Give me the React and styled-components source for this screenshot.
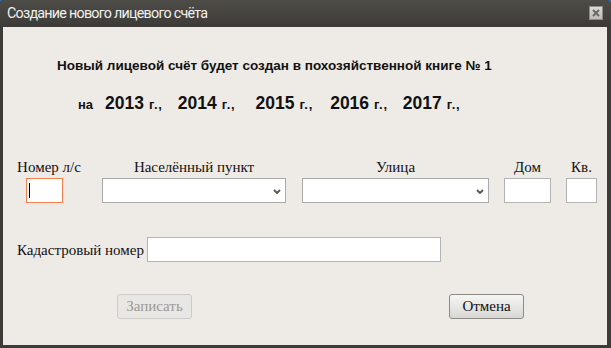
import React from 'react';
import styled, { createGlobalStyle } from 'styled-components';

const GlobalStyle = createGlobalStyle`
  html, body {
    margin: 0;
    padding: 0;
    background: #2f6fb8;
  }
`;

const Dialog = styled.div`
  width: 611px;
  height: 348px;
  box-sizing: border-box;
  display: flex;
  flex-direction: column;
  background: #3c3b37;
  border-radius: 4px 5px 0 0;
  padding: 0 4px 3px 3px;
  overflow: hidden;
`;

const TitleBar = styled.div`
  height: 27px;
  display: flex;
  align-items: center;
  justify-content: space-between;
  margin: 0 -4px 0 -3px;
  padding: 0 8px 2px 7px;
  box-sizing: border-box;
  background: linear-gradient(#4d4c47, #3c3b37);
`;

const Title = styled.div`
  font-family: Roboto, 'DejaVu Sans', sans-serif;
  font-size: 14.3px;
  letter-spacing: -0.75px;
  color: #f2f1ee;
`;

const CloseBox = styled.div`
  width: 12px;
  height: 12px;
  background: linear-gradient(#dcdbd8, #bdbcb8);
  border: 1px solid #8d8c88;
  display: flex;
  align-items: center;
  justify-content: center;
  margin-top: 1px;
`;

const Body = styled.div`
  flex: 1;
  background: #eeebe7;
  display: flex;
  flex-direction: column;
  padding: 0 0 0 13px;
`;

const Heading = styled.div`
  font-family: 'Liberation Sans', Arial, sans-serif;
  font-weight: bold;
  font-size: 13.5px;
  color: #111;
  margin: 31px 0 0 41px;
  line-height: 16px;
`;

const Years = styled.div`
  display: flex;
  align-items: baseline;
  margin: 18px 0 0 62px;
  font-family: 'Liberation Sans', Arial, sans-serif;
  font-weight: bold;
  color: #111;
  line-height: 22px;
`;

const Small = styled.span`
  font-size: 13px;
  letter-spacing: ${p => (p.$wide ? 0.8 : 0)}px;
  margin-left: ${p => p.$ml || 0}px;
`;

const Big = styled.span`
  font-size: 17.5px;
  margin-left: ${p => p.$ml || 0}px;
`;

const FieldsRow = styled.div`
  display: flex;
  margin-top: 42px;
`;

const Field = styled.div`
  width: ${p => p.$w}px;
  margin-left: ${p => p.$ml || 0}px;
  display: flex;
  flex-direction: column;
  align-items: center;
`;

const Label = styled.label`
  font-family: 'Liberation Serif', 'Times New Roman', serif;
  font-size: 15px;
  color: #111;
  line-height: 18px;
  height: 18px;
  margin-bottom: 2px;
  white-space: nowrap;
`;

const TextBox = styled.div`
  position: relative;
  width: ${p => p.$w}px;
  height: 25px;
  box-sizing: border-box;
  background: #fff;
  border: 1px solid ${p => (p.$focused ? '#f47f4f' : '#b3b3b3')};
  align-self: ${p => (p.$start ? 'flex-start' : 'center')};
  margin-left: ${p => p.$ml || 0}px;
`;

const Caret = styled.span`
  position: absolute;
  left: 2px;
  top: 4px;
  width: 1px;
  height: 15px;
  background: #000;
`;

const SelectBox = styled.div`
  position: relative;
  width: ${p => p.$w}px;
  height: 25px;
  box-sizing: border-box;
  background: #fff;
  border: 1px solid #ababab;
`;

const Chevron = styled.svg`
  position: absolute;
  right: 4px;
  top: 10px;
`;

const CadRow = styled.div`
  display: flex;
  align-items: center;
  margin-top: 34px;
`;

const CadLabel = styled(Label)`
  margin: 0 3px 0 1px;
`;

const ButtonsRow = styled.div`
  display: flex;
  margin-top: 32px;
  padding-left: 101px;
`;

const Button = styled.button`
  width: 75px;
  height: 25px;
  box-sizing: border-box;
  border-radius: 3px;
  font-family: 'Liberation Serif', 'Times New Roman', serif;
  font-size: 15px;
  padding: 0;
  margin-left: ${p => p.$ml || 0}px;
  color: ${p => (p.disabled ? '#9b9995' : '#111')};
  border: 1px solid ${p => (p.disabled ? '#cdcbc7' : '#8b8a87')};
  background: ${p =>
    p.disabled ? '#e9e7e3' : 'linear-gradient(#f6f6f5, #d8d7d4)'};
`;

const Down = () => (
  <Chevron width="8" height="5" viewBox="0 0 8 5">
    <path d="M1 1 L4 4 L7 1" fill="none" stroke="#5a5a5a" strokeWidth="2" />
  </Chevron>
);

const years = [
  { y: '2013', ml: 12 },
  { y: '2014', ml: 15 },
  { y: '2015', ml: 20 },
  { y: '2016', ml: 17 },
  { y: '2017', ml: 15 },
];

export default function App() {
  return (
    <>
      <GlobalStyle />
      <Dialog>
        <TitleBar>
          <Title>Создание нового лицевого счёта</Title>
          <CloseBox>
            <svg width="8" height="8" viewBox="0 0 8 8">
              <path d="M1 1 L7 7 M7 1 L1 7" stroke="#6b6a66" strokeWidth="2" />
            </svg>
          </CloseBox>
        </TitleBar>
        <Body>
          <Heading>Новый лицевой счёт будет создан в похозяйственной книге № 1</Heading>
          <Years>
            <Small>на</Small>
            {years.map(item => (
              <React.Fragment key={item.y}>
                <Big $ml={item.ml}>{item.y}</Big>
                <Small $ml={5} $wide>г.,</Small>
              </React.Fragment>
            ))}
          </Years>
          <FieldsRow>
            <Field $w={66}>
              <Label>Номер л/с</Label>
              <TextBox $w={37} $focused $start $ml={10}>
                <Caret />
              </TextBox>
            </Field>
            <Field $w={184} $ml={20}>
              <Label>Населённый пункт</Label>
              <SelectBox $w={184}>
                <Down />
              </SelectBox>
            </Field>
            <Field $w={187} $ml={16}>
              <Label>Улица</Label>
              <SelectBox $w={187}>
                <Down />
              </SelectBox>
            </Field>
            <Field $w={47} $ml={15}>
              <Label>Дом</Label>
              <TextBox $w={47} />
            </Field>
            <Field $w={31} $ml={15}>
              <Label>Кв.</Label>
              <TextBox $w={31} />
            </Field>
          </FieldsRow>
          <CadRow>
            <CadLabel>Кадастровый номер</CadLabel>
            <TextBox $w={294} />
          </CadRow>
          <ButtonsRow>
            <Button disabled>Записать</Button>
            <Button $ml={257}>Отмена</Button>
          </ButtonsRow>
        </Body>
      </Dialog>
    </>
  );
}
